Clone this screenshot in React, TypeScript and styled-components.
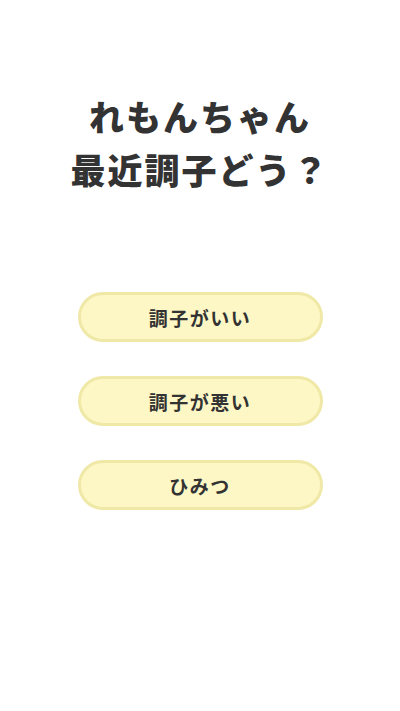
import React from "react";
import styled, { createGlobalStyle } from "styled-components";

const Global = createGlobalStyle`
  html, body { margin: 0; padding: 0; background: #ffffff; }
  body { font-family: "Noto Sans CJK JP", "Noto Sans", sans-serif; }
`;

const Page = styled.div`
  width: 400px;
  height: 711px;
  box-sizing: border-box;
  padding-top: 89px;
  display: flex;
  flex-direction: column;
  align-items: center;
  background: #ffffff;
`;

const Title = styled.h1`
  margin: 0;
  font-family: "Noto Sans CJK JP", sans-serif;
  font-size: 35px;
  font-weight: 900;
  line-height: 53px;
  letter-spacing: 2px;
  color: #333333;
  text-align: center;
`;

const Choices = styled.div`
  margin-top: 97px;
  display: flex;
  flex-direction: column;
  gap: 34px;
`;

const Choice = styled.button`
  width: 245px;
  height: 50px;
  box-sizing: border-box;
  border: 3px solid #efe8a6;
  border-radius: 25px;
  background: #fdf7c5;
  font-family: "Noto Sans CJK JP", sans-serif;
  font-size: 19px;
  font-weight: 700;
  letter-spacing: 1.5px;
  color: #333333;
  display: flex;
  align-items: center;
  justify-content: center;
  padding: 0;
  cursor: pointer;
`;

export default function App() {
  return (
    <>
      <Global />
      <Page>
        <Title>
          れもんちゃん
          <br />
          最近調子どう？
        </Title>
        <Choices>
          <Choice>調子がいい</Choice>
          <Choice>調子が悪い</Choice>
          <Choice>ひみつ</Choice>
        </Choices>
      </Page>
    </>
  );
}
